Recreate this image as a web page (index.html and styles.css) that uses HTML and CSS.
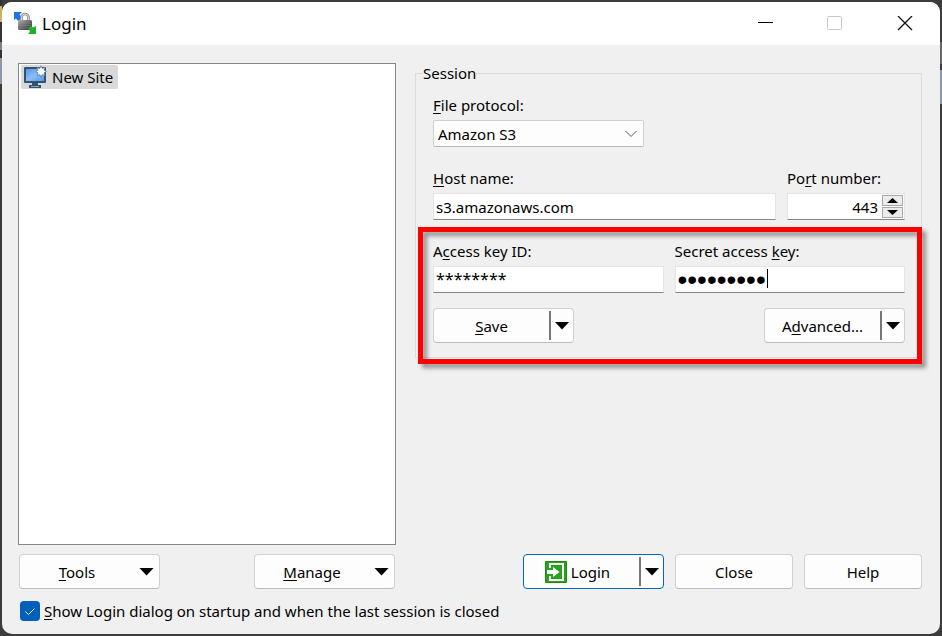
FILE: index.html
```html
<!DOCTYPE html>
<html lang="en">
<head>
    <meta charset="UTF-8">
    <meta name="viewport" content="width=device-width, initial-scale=1.0">
    <title>Login</title>
    <link rel="stylesheet" href="styles.css">
</head>
<body>
    <div class="window">
        <header class="titlebar">
            <svg class="app-icon" width="24" height="24" viewBox="0 0 24 24">
                <defs>
                    <linearGradient id="lock" x1="0" y1="0" x2="1" y2="1">
                        <stop offset="0" stop-color="#b0b0b0"/>
                        <stop offset="0.5" stop-color="#6b6b6b"/>
                        <stop offset="1" stop-color="#2e2e2e"/>
                    </linearGradient>
                </defs>
                <path d="M1 0h8L6.500 2.500 9 6 5 9 3 6.500 1 8z" fill="#1b74e8"/>
                <path d="M8.500 11V5.500a3.500 3.500 0 0 1 7 0V11" fill="none" stroke="#8c8c8c" stroke-width="2.600"/>
                <path d="M8.500 11V5.500a3.500 3.500 0 0 1 7 0V11" fill="none" stroke="#dcdcdc" stroke-width="1"/>
                <rect x="5" y="8" width="14" height="10" rx="1.500" fill="url(#lock)"/>
                <path d="M6 11h12M6 13.500h12M6 16h12" stroke="#888" stroke-width=".5"/>
                <path d="M23 22h-8l2-2.500L15 16l3-2 2 1.500L23 14z" fill="#1fb02a"/>
            </svg>
            <h1>Login</h1>
            <div class="window-buttons">
                <button type="button" aria-label="Minimize">
                    <svg width="16" height="16" viewBox="0 0 16 16"><path d="M1 6.500h15" stroke="#000"/></svg>
                </button>
                <button type="button" aria-label="Maximize" disabled>
                    <svg width="16" height="16" viewBox="0 0 16 16"><rect x="0.500" y="0.500" width="14" height="13" rx="1" fill="none" stroke="#c8c8c8"/></svg>
                </button>
                <button type="button" aria-label="Close window">
                    <svg width="16" height="16" viewBox="0 0 16 16"><path d="M1 0l14 14M15 0L1 14" stroke="#111" stroke-width="1.300"/></svg>
                </button>
            </div>
        </header>

        <form class="content">
            <div class="columns">
                <ul class="site-list">
                    <li class="selected">
                        <svg width="24" height="24" viewBox="0 0 24 24">
                            <defs>
                                <linearGradient id="screen" x1="0" y1="0" x2="1" y2="1">
                                    <stop offset="0" stop-color="#4f94e8"/>
                                    <stop offset="0.5" stop-color="#8cbcf8"/>
                                    <stop offset="1" stop-color="#559aec"/>
                                </linearGradient>
                            </defs>
                            <rect x="1" y="2" width="22" height="16" rx="1" fill="#34526c"/>
                            <rect x="3" y="4" width="18" height="12" fill="url(#screen)"/>
                            <path d="M9 18h6v2h3v3H6v-3h3z" fill="#34526c"/>
                            <path d="M8 21.500h8" stroke="#7fa6c8"/>
                            <path d="M18 .8l1.200 2.600 2.800-1-1 2.800L23.500 6.500 21 7.800l1 2.800-2.800-1L18 12.200l-1.200-2.600-2.800 1 1-2.800-2.500-1.300L15 5.200l-1-2.800 2.800 1z" fill="#fff" stroke="#5c7d9c" stroke-width=".8"/>
                        </svg>
                        <span>New Site</span>
                    </li>
                </ul>

                <fieldset class="session">
                    <legend>Session</legend>

                    <div class="field protocol">
                        <label for="protocol"><u>F</u>ile protocol:</label>
                        <div class="select-wrap">
                            <select id="protocol">
                                <option>Amazon S3</option>
                            </select>
                            <svg width="12" height="8" viewBox="0 0 12 8"><path d="M.5 1l5.500 5.500L11.500 1" fill="none" stroke="#555"/></svg>
                        </div>
                    </div>

                    <div class="row">
                        <div class="field">
                            <label for="host"><u>H</u>ost name:</label>
                            <input type="text" id="host" value="s3.amazonaws.com">
                        </div>
                        <div class="field port">
                            <label for="port">Po<u>r</u>t number:</label>
                            <div class="spinner">
                                <input type="text" id="port" value="443">
                                <div class="spin-buttons">
                                    <button type="button" aria-label="Increase"><svg width="11" height="5" viewBox="0 0 11 5"><path d="M0 5L5.500 0 11 5z"/></svg></button>
                                    <button type="button" aria-label="Decrease"><svg width="11" height="5" viewBox="0 0 11 5"><path d="M0 0l5.500 5L11 0z"/></svg></button>
                                </div>
                            </div>
                        </div>
                    </div>

                    <div class="credentials">
                        <div class="row">
                            <div class="field">
                                <label for="access-key">A<u>c</u>cess key ID:</label>
                                <input type="text" id="access-key" class="masked" value="********">
                            </div>
                            <div class="field">
                                <label for="secret-key">Secret access <u>k</u>ey:</label>
                                <div class="secret">
                                    <input type="password" id="secret-key" value="secretkey">
                                    <span class="caret"></span>
                                </div>
                            </div>
                        </div>
                        <div class="row session-actions">
                            <div class="split">
                                <button type="button"><span><u>S</u>ave</span></button>
                                <button type="button" class="drop" aria-label="Save options"><i class="arrow"></i></button>
                            </div>
                            <div class="split">
                                <button type="button"><span>A<u>d</u>vanced...</span></button>
                                <button type="button" class="drop" aria-label="Advanced options"><i class="arrow"></i></button>
                            </div>
                        </div>
                        <div class="highlight"></div>
                    </div>
                </fieldset>
            </div>

            <footer class="actions">
                <div class="tools">
                    <button type="button" class="btn menu"><span><u>T</u>ools</span><i class="arrow"></i></button>
                    <button type="button" class="btn menu"><span><u>M</u>anage</span><i class="arrow"></i></button>
                </div>
                <div class="dialog-buttons">
                    <div class="split primary">
                        <button type="button" class="login">
                            <svg width="22" height="22" viewBox="0 0 22 22">
                                <rect width="22" height="22" rx="1" fill="#2aa31c"/>
                                <rect x=".5" y=".5" width="21" height="21" rx="1" fill="none" stroke="#1a8a10"/>
                                <path d="M5 7V3h13v16H5v-4" fill="none" stroke="#fff" stroke-width="2"/>
                                <path d="M2 9h6V6l6.500 5L8 16v-3H2z" fill="#fff"/>
                            </svg>
                            <span>Login</span>
                        </button>
                        <button type="button" class="drop" aria-label="Login options"><i class="arrow"></i></button>
                    </div>
                    <button type="button" class="btn">Close</button>
                    <button type="button" class="btn">Help</button>
                </div>
            </footer>

            <label class="startup">
                <input type="checkbox" checked>
                <span><u>S</u>how Login dialog on startup and when the last session is closed</span>
            </label>
        </form>
    </div>
</body>
</html>
```
FILE: styles.css
```css
:root {
    --ui-font: "Noto Sans", "Open Sans", Tahoma, sans-serif;
    --face: #f0f0f0;
    --border: #d0d0d0;
    --accent: #0067c0;
}

* {
    margin: 0;
    padding: 0;
    box-sizing: border-box;
}

/* the desktop shows as a thin strip round the window */
body {
    display: flex;
    min-height: 100vh;
    padding: 2px;
    background:
        linear-gradient(#333 6px, #c9b566 6px 22px, #333 22px 42px, #8a7f74 42px 50px, #333 50px 58px, #8d97a8 58px 84px, transparent 84px) left top / 2px 100% no-repeat,
        linear-gradient(#3c3c3c 42px, #666 42px 64px, #3c3c3c 64px 70px, #8d97a8 70px 104px, transparent 104px) right top / 2px 100% no-repeat,
        #3c3c3c;
    font: 15px/20px var(--ui-font);
    color: #000;
}

button, input, select {
    font: inherit;
    color: inherit;
}

u {
    text-underline-offset: 2px;
    text-decoration-thickness: 1px;
}

svg {
    display: block;
    flex: none;
}

.window {
    flex: 1;
    display: flex;
    flex-direction: column;
    background: var(--face);
    border-radius: 10px;
    overflow: hidden;
}

/* title bar */
.titlebar {
    display: flex;
    align-items: center;
    height: 43px;
    padding-left: 11px;
    background: #fff;
}

.titlebar h1 {
    flex: 1;
    margin-left: 5px;
    font-size: 17px;
    font-weight: 400;
}

.window-buttons {
    display: flex;
}

.window-buttons button {
    display: flex;
    align-items: center;
    justify-content: center;
    width: 70px;
    height: 43px;
    border: 0;
    background: none;
}

/* dialog body */
.content {
    flex: 1;
    display: flex;
    flex-direction: column;
    padding: 18px 18px 13px 16px;
}

.columns {
    flex: 1;
    display: flex;
    align-items: flex-start;
    gap: 19px;
}

.site-list {
    align-self: stretch;
    width: 378px;
    padding: 1px 2px;
    border: 1px solid #828790;
    background: #fff;
    list-style: none;
}

.selected {
    display: flex;
    align-items: center;
    gap: 5px;
    width: fit-content;
    height: 24px;
    padding: 0 5px 0 2px;
    border-radius: 2px;
    background: #d9d9d9;
}

.session {
    flex: 1;
    min-width: 0;
    padding: 12px 16px 14px 17px;
    border: 1px solid #dcdcdc;
}

.session legend {
    margin-left: -10px;
}

.row {
    display: flex;
    gap: 11px;
}

.field {
    flex: 1;
    display: flex;
    flex-direction: column;
    gap: 5px;
    min-width: 0;
    margin-bottom: 21px;
}

.protocol {
    width: 211px;
}

.port {
    flex: none;
    width: 118px;
}

.field input {
    width: 100%;
    height: 27px;
    padding: 0 2px;
    border: 1px solid #e5e5e5;
    border-bottom-color: #868686;
    background: #fff;
    outline: 0;
}

.select-wrap, .spinner, .secret, .credentials {
    position: relative;
}

.select-wrap select {
    width: 100%;
    height: 27px;
    padding: 0 4px;
    border: 1px solid var(--border);
    border-bottom-color: #b8b8b8;
    border-radius: 2px;
    background: #fdfdfd;
    appearance: none;
}

.select-wrap svg {
    position: absolute;
    top: 10px;
    right: 7px;
    pointer-events: none;
}

.field .spinner input {
    padding-right: 26px;
    text-align: right;
}

.spin-buttons {
    position: absolute;
    top: 2px;
    right: 2px;
    display: flex;
    flex-direction: column;
    gap: 1px;
}

.spin-buttons button {
    display: flex;
    align-items: center;
    justify-content: center;
    width: 21px;
    height: 11px;
    border: 1px solid #a8a8a8;
    background: #ececec;
}

.field .masked {
    padding-bottom: 2px;
    font-size: 16px;
}

.secret input {
    font-family: "Liberation Sans", Arial, sans-serif;
    font-size: 28px;
}

.caret {
    position: absolute;
    top: 3px;
    left: 92px;
    width: 1px;
    height: 19px;
    background: #000;
}

.credentials .field {
    margin-bottom: 15px;
}

.session-actions {
    justify-content: space-between;
}

/* annotation frame over the key fields */
.highlight {
    position: absolute;
    inset: -14px -17px -21px -15px;
    border: 5px solid #f00;
    filter: drop-shadow(4px 4px 2px rgba(0, 0, 0, 0.4));
    pointer-events: none;
}

/* buttons */
.btn, .split {
    height: 35px;
    border: 1px solid var(--border);
    border-bottom-color: #bcbcbc;
    border-radius: 4px;
    background: #fdfdfd;
}

.btn {
    width: 118px;
}

.split {
    display: flex;
    align-items: center;
    width: 141px;
}

.split button {
    display: flex;
    flex: 1;
    align-items: center;
    justify-content: center;
    gap: 4px;
    height: 29px;
    border: 0;
    background: none;
}

.split .drop {
    flex: none;
    width: 24px;
    border-left: 2px solid #777;
}

.split.primary {
    border-color: var(--accent);
}

.split .login {
    padding-right: 8px;
}

.arrow {
    width: 15px;
    height: 8px;
    background: #000;
    clip-path: polygon(0 0, 100% 0, 50% 100%);
}

.menu {
    display: flex;
    align-items: center;
    gap: 5px;
    width: 141px;
    padding-right: 5px;
}

.menu span {
    flex: 1;
}

.actions {
    display: flex;
    justify-content: space-between;
    margin-top: 9px;
}

.tools {
    display: flex;
    justify-content: space-between;
    width: 378px;
    padding: 0 1px;
}

.dialog-buttons {
    display: flex;
    gap: 11px;
}

.startup {
    display: flex;
    align-items: center;
    gap: 4px;
    width: fit-content;
    margin: 12px 0 0 2px;
}

.startup input {
    width: 20px;
    height: 20px;
    border-radius: 4px;
    background: #005fb8 url("data:image/svg+xml,%3Csvg xmlns='http://www.w3.org/2000/svg' viewBox='0 0 20 20'%3E%3Cpath d='M5.500 10.500l3 3 6-6' fill='none' stroke='%23fff'/%3E%3C/svg%3E");
    appearance: none;
}
```
